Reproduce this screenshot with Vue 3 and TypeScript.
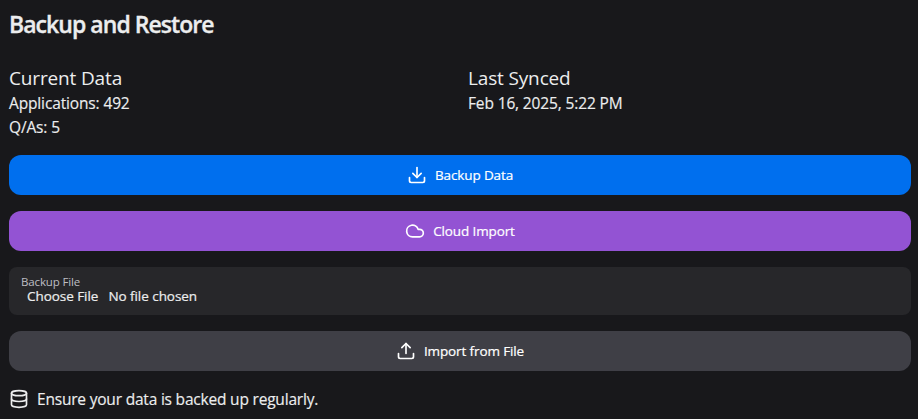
<script setup lang="ts">
interface Stat {
  label: string
  value: number
}

const stats: Stat[] = [
  { label: 'Applications', value: 492 },
  { label: 'Q/As', value: 5 },
]
const lastSynced = 'Feb 16, 2025, 5:22 PM'
</script>

<template>
  <main class="panel">
    <h1 class="title">Backup and Restore</h1>

    <section class="summary">
      <div>
        <h2 class="heading">Current Data</h2>
        <p v-for="stat in stats" :key="stat.label" class="line">{{ stat.label }}: {{ stat.value }}</p>
      </div>
      <div>
        <h2 class="heading">Last Synced</h2>
        <p class="line">{{ lastSynced }}</p>
      </div>
    </section>

    <button class="btn primary" type="button">
      <svg class="icon" viewBox="0 0 24 24">
        <path d="M21 15v4a2 2 0 0 1-2 2H5a2 2 0 0 1-2-2v-4" />
        <path d="m7 10 5 5 5-5" />
        <path d="M12 15V3" />
      </svg>
      <span>Backup Data</span>
    </button>

    <button class="btn secondary" type="button">
      <svg class="icon" viewBox="0 0 24 24">
        <path d="M17.5 19H9a7 7 0 1 1 6.71-9h1.79a4.5 4.5 0 1 1 0 9Z" />
      </svg>
      <span>Cloud Import</span>
    </button>

    <div class="field">
      <span class="field-label">Backup File</span>
      <div class="file">
        <span>Choose File</span>
        <span>No file chosen</span>
      </div>
    </div>

    <button class="btn neutral" type="button">
      <svg class="icon" viewBox="0 0 24 24">
        <path d="M21 15v4a2 2 0 0 1-2 2H5a2 2 0 0 1-2-2v-4" />
        <path d="m17 8-5-5-5 5" />
        <path d="M12 3v12" />
      </svg>
      <span>Import from File</span>
    </button>

    <p class="note">
      <svg class="icon" viewBox="0 0 24 24">
        <ellipse cx="12" cy="5" rx="9" ry="3" />
        <path d="M3 5v14a9 3 0 0 0 18 0V5" />
        <path d="M3 12a9 3 0 0 0 18 0" />
      </svg>
      <span>Ensure your data is backed up regularly.</span>
    </p>
  </main>
</template>

<style>
body {
  background: #18181b;
}
</style>

<style scoped>
.panel {
  box-sizing: border-box;
  height: 419px;
  overflow: hidden;
  padding: 8px 7px 0 9px;
  background: #18181b;
  color: #ecedee;
  font-family: "Open Sans", "Noto Sans", sans-serif;
  font-size: 15.5px;
  line-height: 24px;
}
h1,
h2,
p {
  margin: 0;
}
.title {
  margin-bottom: 25px;
  font-size: 23px;
  font-weight: 600;
  line-height: 32px;
  letter-spacing: -0.95px;
  -webkit-text-stroke: 0.35px currentColor;
}
.summary {
  display: grid;
  grid-template-columns: 1fr 1fr;
  gap: 16px;
  margin-bottom: 16px;
}
.heading {
  font-size: 19px;
  font-weight: 400;
  line-height: 26px;
  letter-spacing: -0.15px;
}
.line {
  letter-spacing: -0.14px;
  -webkit-text-stroke: 0.15px currentColor;
}
.btn {
  display: flex;
  align-items: center;
  justify-content: center;
  gap: 8px;
  width: 100%;
  height: 40px;
  margin: 0 0 16px;
  padding: 0;
  border: 0;
  border-radius: 12px;
  color: #fff;
  font-family: inherit;
  font-size: 13.5px;
  line-height: 20px;
  letter-spacing: -0.12px;
  -webkit-text-stroke: 0.2px currentColor;
}
.primary {
  background: #006fee;
}
.secondary {
  background: #9353d3;
}
.neutral {
  background: #3f3f46;
}
.icon {
  flex: none;
  width: 20px;
  height: 20px;
  fill: none;
  stroke: currentColor;
  stroke-width: 2;
  stroke-linecap: round;
  stroke-linejoin: round;
}
.field {
  box-sizing: border-box;
  height: 48px;
  margin-bottom: 16px;
  padding: 7px 12px;
  border-radius: 8px;
  background: #27272a;
}
.field-label {
  display: block;
  color: #bebec3;
  font-size: 11.5px;
  line-height: 15px;
  letter-spacing: -0.15px;
}
.file {
  display: flex;
  gap: 10px;
  padding-left: 6px;
  font-size: 13.5px;
  line-height: 14px;
  letter-spacing: -0.05px;
  -webkit-text-stroke: 0.2px currentColor;
}
.note {
  display: flex;
  align-items: center;
  gap: 8px;
  letter-spacing: -0.2px;
  -webkit-text-stroke: 0.15px currentColor;
}
</style>
